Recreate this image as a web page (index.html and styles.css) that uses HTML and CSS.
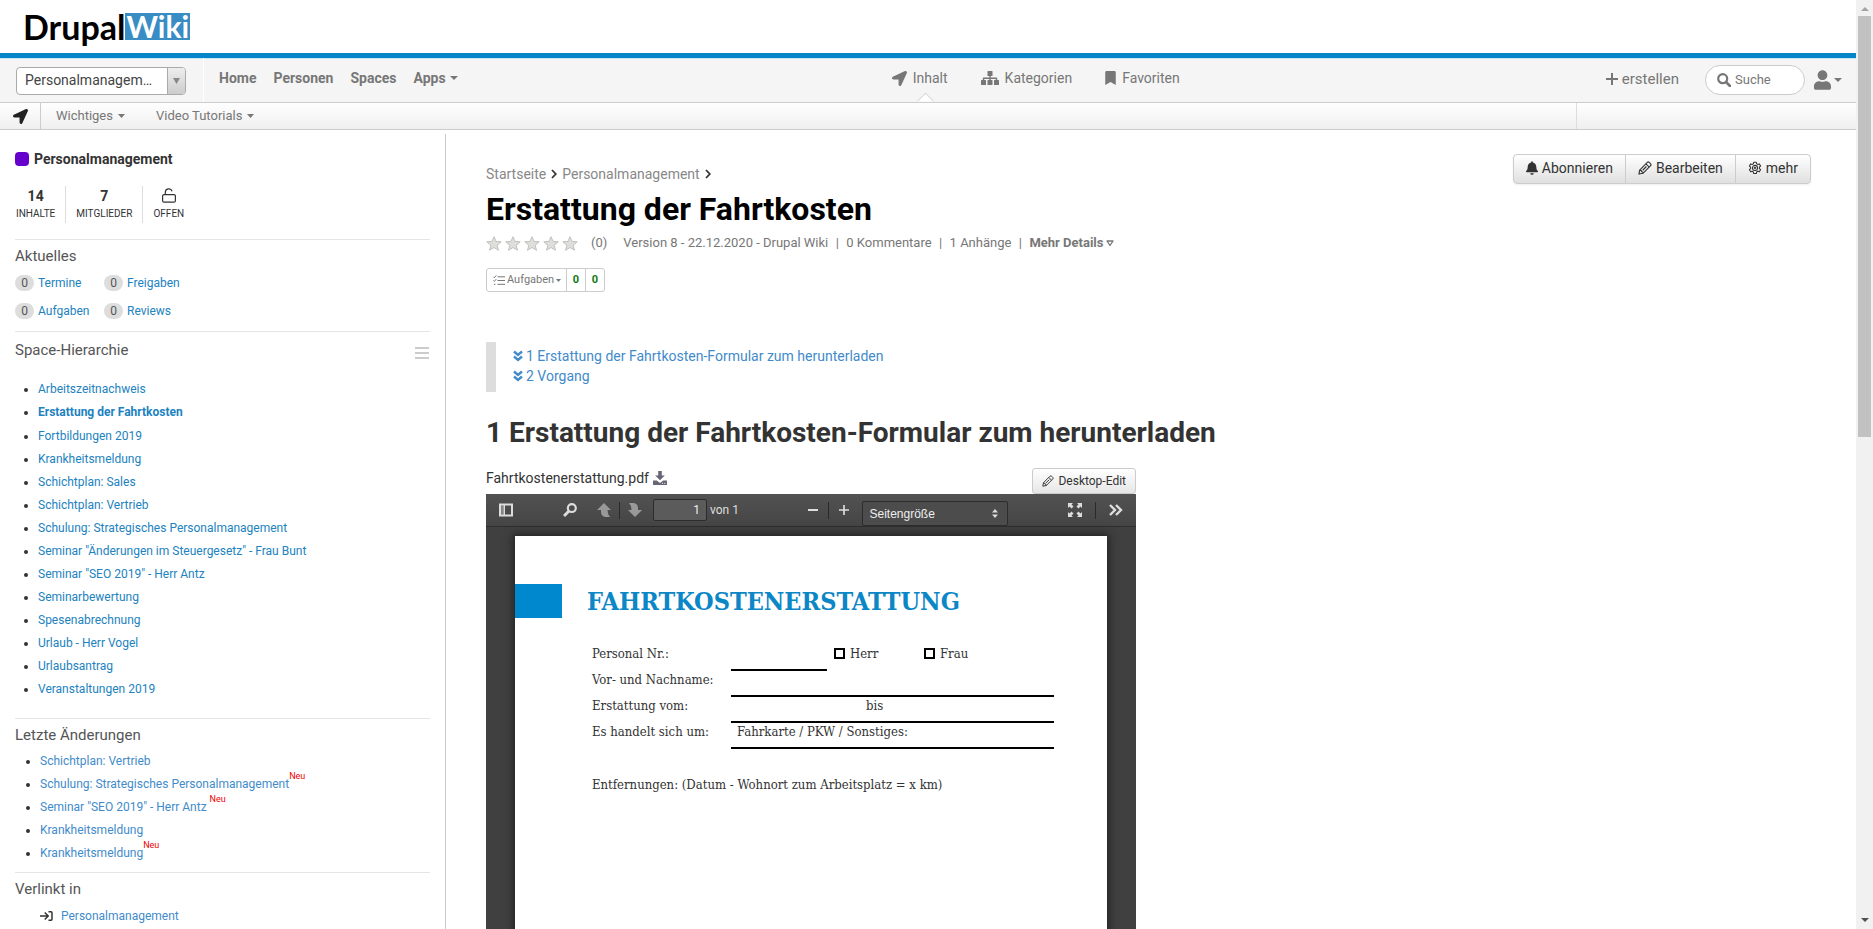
FILE: index.html
```html
<!DOCTYPE html>
<html lang="de">
<head>
<meta charset="utf-8">
<title>Erstattung der Fahrtkosten | Drupal Wiki</title>
<link rel="stylesheet" href="styles.css">
</head>
<body>
<svg class="sprite" aria-hidden="true">
  <symbol id="i-arrow" viewBox="0 0 512 512"><path d="M444.52 3.52L28.74 195.42c-47.97 22.39-31.98 92.75 19.19 92.75h175.91v175.91c0 51.17 70.36 67.17 92.75 19.19l191.9-415.78c15.99-38.39-25.59-79.97-63.97-63.97z"/></symbol>
  <symbol id="i-sitemap" viewBox="0 0 18 14"><path d="M7 0h4q.5 0 .5.5v4q0 .5-.5.5H9.700v1.600H15.500q.700 0 .700.700V9H17.500q.5 0 .5.5v4q0 .5-.5.5h-4q-.5 0-.5-.5v-4q0-.5.5-.5h1.300V8H9.700v1H11q.5 0 .5.5v4q0 .5-.5.5H7q-.5 0-.5-.5v-4Q6.500 9 7 9h1.300V8H3.200v1H4.500q.5 0 .5.5v4q0 .5-.5.5h-4q-.5 0-.5-.5v-4Q0 9 .5 9h1.300V7.300q0-.7.7-.7h5.800V5H7q-.5 0-.5-.5v-4Q6.500 0 7 0z"/></symbol>
  <symbol id="i-bookmark" viewBox="0 0 384 512"><path d="M0 512V48C0 21.490 21.490 0 48 0h288c26.510 0 48 21.490 48 48v464L192 400 0 512z"/></symbol>
  <symbol id="i-bell" viewBox="0 0 448 512"><path d="M224 512c35.320 0 63.970-28.650 63.970-64H160.030c0 35.350 28.650 64 63.970 64zm215.390-149.710c-19.320-20.760-55.470-51.990-55.470-154.290 0-77.700-54.480-139.900-127.940-155.160V32c0-17.670-14.320-32-31.980-32s-31.980 14.330-31.980 32v20.840C118.560 68.100 64.080 130.300 64.080 208c0 102.300-36.150 133.530-55.470 154.290-6 6.450-8.660 14.160-8.610 21.710.110 16.400 12.980 32 32.100 32h383.800c19.120 0 32-15.600 32.100-32 .050-7.550-2.610-15.270-8.610-21.710z"/></symbol>
  <symbol id="i-user" viewBox="0 0 448 512"><path d="M224 256c70.700 0 128-57.300 128-128S294.700 0 224 0 96 57.300 96 128s57.300 128 128 128zm89.600 32h-16.700c-22.200 10.200-46.900 16-72.900 16s-50.600-5.800-72.900-16h-16.700C60.200 288 0 348.200 0 422.400V464c0 26.500 21.500 48 48 48h352c26.500 0 48-21.500 48-48v-41.600c0-74.200-60.200-134.400-134.400-134.400z"/></symbol>
  <symbol id="i-search" viewBox="0 0 14 14"><circle cx="5.700" cy="5.700" r="4.500" fill="none" stroke="currentColor" stroke-width="2.200"/><path d="M9 9l4 4" stroke="currentColor" stroke-width="2.600" stroke-linecap="round"/></symbol>
  <symbol id="i-plus" viewBox="0 0 12 12"><path d="M6 0v12M0 6h12" stroke="currentColor" stroke-width="2"/></symbol>
  <symbol id="i-caret" viewBox="0 0 8 4" preserveAspectRatio="none"><path d="M0 0h8L4 4z"/></symbol>
  <symbol id="i-lock" viewBox="0 0 14 15"><g fill="none" stroke="currentColor" stroke-width="1.200"><rect x=".6" y="6.600" width="12.800" height="7.600" rx="1.500"/><path d="M3.300 6.500V4.500a3.500 3.500 0 0 1 6.800-1.300"/></g></symbol>
  <symbol id="i-pencil" viewBox="0 0 15 15"><g fill="none" stroke="currentColor" stroke-width="1.200" stroke-linejoin="round"><path d="M1 14l.8-4.300L10 1.500q1-1 2 0L13.500 3q1 1 0 2L5.300 13.200z"/><path d="M8.500 3l3.500 3.500M5 9.900l4-4M2 10l1.500.2.300 1.300 1.300.3.200 1.300"/></g></symbol>
  <symbol id="i-gear" viewBox="0 0 16 16"><g fill="none" stroke="currentColor" stroke-width="1.200" stroke-linejoin="round"><path d="M6.500 1.500h3l.4 1.700 1.200.7 1.800-.6 1.500 2.500-1.400 1.300v1.500l1.400 1.300-1.500 2.500-1.800-.6-1.200.7-.4 1.800h-3l-.4-1.800-1.200-.7-1.800.6-1.500-2.500L3 8.600V7.100L1.600 5.800l1.500-2.500 1.800.6 1.200-.7z"/><circle cx="8" cy="7.900" r="2.900"/><circle cx="8" cy="7.900" r=".7"/></g></symbol>
  <symbol id="i-star" viewBox="0 0 16 15"><path d="M8 .7l2 4.700 5.200.4-4 3.400 1.300 5.100L8 11.500l-4.500 2.800 1.300-5.100-4-3.400L6 5.400z" fill="#dededc" stroke="#c0c0bd" stroke-width="1"/></symbol>
  <symbol id="i-tasks" viewBox="0 0 12 11"><path d="M4.500 1.800H12M4.500 5.500H12M4.500 9.300H12M.3 1.700l1 1 2-2.300M.3 5.400l1 1 2-2.300M.8 9.300h1.600" fill="none" stroke="currentColor" stroke-width="1"/></symbol>
  <symbol id="i-down2" viewBox="0 0 10 12"><path d="M1 1.500l4 3.500 4-3.500M1 6.500L5 10l4-3.500" fill="none" stroke="currentColor" stroke-width="2.400"/></symbol>
  <symbol id="i-chev" viewBox="0 0 6 10"><path d="M1 1l3.800 4L1 9" fill="none" stroke="currentColor" stroke-width="1.800"/></symbol>
  <symbol id="i-tri" viewBox="0 0 8 7"><path d="M1 1h6L4 5.500z" fill="none" stroke="currentColor" stroke-width="1.300" stroke-linejoin="round"/></symbol>
  <symbol id="i-download" viewBox="0 0 14 14"><path d="M5.200 0h3.600v4.500h3L7 9.200 2.200 4.500h3zM0 9.500h3.800L7 12l3.200-2.500H14V14H0z"/><path d="M9 12.300h1M11.300 12.300h1" stroke="#fff"/></symbol>
  <symbol id="i-enter" viewBox="0 0 13 10"><path d="M0 5h8M4.700 1.500L8.200 5 4.700 8.500M8.500.8H11q1 0 1 1v6.400q0 1-1 1H8.500" fill="none" stroke="currentColor" stroke-width="1.500"/></symbol>
  <symbol id="i-side" viewBox="0 0 14 13"><path d="M0 0h14v13H0zM2 2v9h2.500V2zm4 0v9h6V2z" fill-rule="evenodd"/><path d="M2 2h2.500v9H2z" opacity=".4"/></symbol>
  <symbol id="i-find" viewBox="0 0 13 13"><circle cx="8.200" cy="4.700" r="3.700" fill="none" stroke="currentColor" stroke-width="2"/><path d="M5.500 7.500L1 12" stroke="currentColor" stroke-width="2.600"/></symbol>
  <symbol id="i-up" viewBox="0 0 14 14"><path d="M7 0l7 7h-3.500q0 4.500 2.500 7H8Q4 13 4 9V7H0z"/></symbol>
  <symbol id="i-down" viewBox="0 0 14 14"><path d="M7 14l7-7h-4V5Q10 1 6 0H1q2.500 2.500 2.500 7H0z"/></symbol>
  <symbol id="i-full" viewBox="0 0 14 14"><path d="M0 0h5L3.500 1.500l2 2-2 2-2-2L0 5zM14 0v5l-1.500-1.500-2 2-2-2 2-2L9 0zM0 14V9l1.500 1.500 2-2 2 2-2 2L5 14zM14 14H9l1.500-1.500-2-2 2-2 2 2L14 9z"/></symbol>
  <symbol id="i-more" viewBox="0 0 14 12"><path d="M1 1l5 5-5 5M7 1l5 5-5 5" fill="none" stroke="currentColor" stroke-width="2.400"/></symbol>
  <symbol id="i-updown" viewBox="0 0 6 9"><path d="M3 0l3 3.500H0zM3 9l3-3.500H0z"/></symbol>
</svg>

<div class="page">
  <header>
    <div class="brand"><a class="logo" href="#"><span class="logo-a">Drupal</span><span class="logo-b">Wiki</span></a></div>
    <div class="navbar">
      <div class="nav-left">
        <div class="space-select">
          <select aria-label="Space"><option>Personalmanagem…</option></select>
          <span class="space-arrow"><svg class="caret-d"><use href="#i-caret"/></svg></span>
        </div>
        <nav class="nav-main">
          <a href="#">Home</a><a href="#">Personen</a><a href="#">Spaces</a><a href="#">Apps<svg class="caret"><use href="#i-caret"/></svg></a>
        </nav>
      </div>
      <nav class="nav-mid">
        <a class="active" href="#"><svg class="i15"><use href="#i-arrow"/></svg>Inhalt</a>
        <a href="#"><svg class="i18"><use href="#i-sitemap"/></svg>Kategorien</a>
        <a href="#"><svg class="i11"><use href="#i-bookmark"/></svg>Favoriten</a>
      </nav>
      <div class="nav-right">
        <a class="create" href="#"><svg class="i12"><use href="#i-plus"/></svg>erstellen</a>
        <label class="search"><svg class="i14"><use href="#i-search"/></svg><input type="text" placeholder="Suche" aria-label="Suche"></label>
        <button class="user" aria-label="Benutzer"><svg class="i-user"><use href="#i-user"/></svg><svg class="caret"><use href="#i-caret"/></svg></button>
      </div>
    </div>
    <div class="subnav">
      <a class="sub-icon" href="#" aria-label="Inhalt"><svg class="i15"><use href="#i-arrow"/></svg></a>
      <nav class="sub-links"><a href="#">Wichtiges<svg class="caret-s"><use href="#i-caret"/></svg></a><a href="#">Video Tutorials<svg class="caret-s"><use href="#i-caret"/></svg></a></nav>
      <div class="sub-end"></div>
    </div>
  </header>

  <div class="columns">
    <aside class="sidebar">
      <a class="space-name" href="#"><span class="swatch"></span>Personalmanagement</a>
      <div class="stats">
        <div><b>14</b><span>INHALTE</span></div>
        <div><b>7</b><span>MITGLIEDER</span></div>
        <div><svg class="lock"><use href="#i-lock"/></svg><span>OFFEN</span></div>
      </div>
      <section class="block">
        <h3>Aktuelles</h3>
        <div class="counts">
          <a href="#"><span class="badge">0</span>Termine</a><a href="#"><span class="badge">0</span>Freigaben</a>
          <a href="#"><span class="badge">0</span>Aufgaben</a><a href="#"><span class="badge">0</span>Reviews</a>
        </div>
      </section>
      <section class="block hierarchy">
        <div class="head"><h3>Space-Hierarchie</h3><button class="burger" aria-label="Menü"><i></i><i></i><i></i></button></div>
        <ul>
          <li><a href="#">Arbeitszeitnachweis</a></li>
          <li class="current"><a href="#">Erstattung der Fahrtkosten</a></li>
          <li><a href="#">Fortbildungen 2019</a></li>
          <li><a href="#">Krankheitsmeldung</a></li>
          <li><a href="#">Schichtplan: Sales</a></li>
          <li><a href="#">Schichtplan: Vertrieb</a></li>
          <li><a href="#">Schulung: Strategisches Personalmanagement</a></li>
          <li><a href="#">Seminar "Änderungen im Steuergesetz" - Frau Bunt</a></li>
          <li><a href="#">Seminar "SEO 2019" - Herr Antz</a></li>
          <li><a href="#">Seminarbewertung</a></li>
          <li><a href="#">Spesenabrechnung</a></li>
          <li><a href="#">Urlaub - Herr Vogel</a></li>
          <li><a href="#">Urlaubsantrag</a></li>
          <li><a href="#">Veranstaltungen 2019</a></li>
        </ul>
      </section>
      <section class="block recent">
        <h3>Letzte Änderungen</h3>
        <ul>
          <li><a href="#">Schichtplan: Vertrieb</a></li>
          <li><a href="#">Schulung: Strategisches Personalmanagement</a><sup>Neu</sup></li>
          <li><a href="#">Seminar "SEO 2019" - Herr Antz</a> <sup>Neu</sup></li>
          <li><a href="#">Krankheitsmeldung</a></li>
          <li><a href="#">Krankheitsmeldung</a><sup>Neu</sup></li>
        </ul>
      </section>
      <section class="block linked">
        <h3>Verlinkt in</h3>
        <a href="#"><svg class="enter"><use href="#i-enter"/></svg>Personalmanagement</a>
      </section>
    </aside>

    <main>
      <div class="top">
        <div class="title-area">
          <nav class="crumbs"><a href="#">Startseite</a><svg class="chev"><use href="#i-chev"/></svg><a href="#">Personalmanagement</a><svg class="chev"><use href="#i-chev"/></svg></nav>
          <h1>Erstattung der Fahrtkosten</h1>
        </div>
        <div class="actions">
          <button><svg class="bell"><use href="#i-bell"/></svg>Abonnieren</button><button><svg class="i14"><use href="#i-pencil"/></svg>Bearbeiten</button><button><svg class="i14"><use href="#i-gear"/></svg>mehr</button>
        </div>
      </div>
      <div class="meta">
        <span class="stars"><svg><use href="#i-star"/></svg><svg><use href="#i-star"/></svg><svg><use href="#i-star"/></svg><svg><use href="#i-star"/></svg><svg><use href="#i-star"/></svg></span>
        <span class="votes">(0)</span>
        <span>Version 8 - 22.12.2020 - Drupal Wiki</span><span class="bar">|</span><span>0 Kommentare</span><span class="bar">|</span><span>1 Anhänge</span><span class="bar">|</span><a href="#">Mehr Details<svg class="tri"><use href="#i-tri"/></svg></a>
      </div>
      <div class="tasks">
        <button><svg class="tasks-icon"><use href="#i-tasks"/></svg>Aufgaben<svg class="caret-t"><use href="#i-caret"/></svg></button><b>0</b><b>0</b>
      </div>
      <nav class="toc">
        <a href="#s1"><svg class="down2"><use href="#i-down2"/></svg>1 Erstattung der Fahrtkosten-Formular zum herunterladen</a>
        <a href="#s2"><svg class="down2"><use href="#i-down2"/></svg>2 Vorgang</a>
      </nav>
      <h2 id="s1">1 Erstattung der Fahrtkosten-Formular zum herunterladen</h2>

      <div class="attachment">
        <div class="file">
          <a href="#">Fahrtkostenerstattung.pdf<svg class="i14"><use href="#i-download"/></svg></a>
          <button class="desktop-edit"><svg class="i12"><use href="#i-pencil"/></svg>Desktop-Edit</button>
        </div>
        <div class="viewer">
          <div class="toolbar">
            <div class="tool-group">
              <button aria-label="Seitenleiste" class="t-side"><svg class="i14"><use href="#i-side"/></svg></button>
              <button aria-label="Suchen" class="t-find"><svg class="i14"><use href="#i-find"/></svg></button>
              <button aria-label="Zurück" class="dim"><svg class="i14"><use href="#i-up"/></svg></button>
              <span class="sep"></span>
              <button aria-label="Weiter" class="dim"><svg class="i14"><use href="#i-down"/></svg></button>
              <input class="page-no" type="text" value="1" aria-label="Seite"><span class="of">von 1</span>
            </div>
            <div class="tool-group zoom-group">
              <button aria-label="Verkleinern"><span class="minus"></span></button>
              <span class="sep"></span>
              <button aria-label="Vergrößern"><svg class="i10"><use href="#i-plus"/></svg></button>
              <div class="zoom"><select aria-label="Zoom"><option>Seitengröße</option></select><svg class="updown"><use href="#i-updown"/></svg></div>
            </div>
            <div class="tool-group">
              <button aria-label="Vollbild"><svg class="i14"><use href="#i-full"/></svg></button>
              <span class="sep wide"></span>
              <button aria-label="Werkzeuge"><svg class="more"><use href="#i-more"/></svg></button>
            </div>
          </div>
          <div class="sheet">
            <div class="sheet-head"><div class="block-mark"></div><h4>FAHRTKOSTENERSTATTUNG</h4></div>
            <form class="form">
              <div class="row"><label for="nr">Personal Nr.:</label><div class="nr"><input id="nr" class="line short" type="text"><label class="check"><input type="checkbox">Herr</label><label class="check"><input type="checkbox">Frau</label></div></div>
              <div class="row"><label for="name">Vor- und Nachname:</label><input id="name" class="line" type="text"></div>
              <div class="row"><label for="from">Erstattung vom:</label><div class="line split"><input id="from" class="from" type="text"><label for="to">bis</label><input id="to" type="text"></div></div>
              <div class="row"><label for="kind">Es handelt sich um:</label><div class="line split kind"><label for="kind">Fahrkarte / PKW / Sonstiges:</label><input id="kind" type="text"></div></div>
              <p>Entfernungen: (Datum - Wohnort zum Arbeitsplatz = x km)</p>
            </form>
          </div>
        </div>
      </div>
    </main>
  </div>
</div>
<div class="scrollbar" aria-hidden="true"><svg class="sb-up"><use href="#i-caret"/></svg><span class="thumb"></span><svg class="sb-down"><use href="#i-caret"/></svg></div>
</body>
</html>
```
FILE: styles.css
```css
* { box-sizing: border-box; }
body {
  margin: 0;
  display: flex;
  height: 100vh;
  overflow: hidden;
  background: #fff;
  color: #333;
  font: 14px/20px Roboto, "Liberation Sans", sans-serif;
}
a { color: inherit; text-decoration: none; }
button, input, select { font: inherit; color: inherit; }
button { cursor: pointer; }
h1, h2, h3, h4, p, ul { margin: 0; padding: 0; font-weight: inherit; }
svg { fill: currentColor; flex: none; }
.sprite { position: absolute; width: 0; height: 0; }
.page { flex: 1; min-width: 0; overflow: hidden; }

.i10 { width: 10px; height: 10px; }
.i11 { width: 11px; height: 14px; }
.i12 { width: 12px; height: 12px; }
.i14 { width: 14px; height: 14px; }
.i15 { width: 15px; height: 15px; }
.i18 { width: 18px; height: 14px; }
.caret { width: 8px; height: 4px; }
.caret-s { width: 7px; height: 4px; }
.caret-t { width: 5px; height: 3px; }
.caret-d { width: 7px; height: 6px; }

/* Header */
.brand { display: flex; align-items: center; height: 53px; padding-left: 23px; }
.logo { display: flex; align-items: center; font-family: Lato, sans-serif; font-weight: 700; }
.logo-a { color: #000; font-size: 34px; line-height: 27px; }
.logo-b { background: #3a8cc4; color: #fff; font-size: 30px; line-height: 27px; padding: 0 1px; }
.navbar {
  display: flex;
  justify-content: space-between;
  height: 50px;
  background: #f5f5f5;
  border-top: 5px solid #0485c8;
  border-bottom: 1px solid #ccc;
  box-shadow: inset 0 1px #c5e6f7;
  color: #777;
}
.nav-left { display: flex; }
.space-select {
  display: flex;
  width: 170px;
  height: 28px;
  margin: 9px 17px 0 16px;
  border: 1px solid #aaa;
  border-radius: 4px;
  background: #fff;
  overflow: hidden;
}
.space-select select {
  appearance: none;
  flex: 1;
  min-width: 0;
  border: 0;
  background: transparent;
  padding: 0 0 2px 8px;
  color: #444;
  font-size: 14px;
}
.space-arrow {
  display: flex;
  align-items: center;
  justify-content: center;
  width: 18px;
  border-left: 1px solid #aaa;
  background: linear-gradient(#eee, #ccc);
  color: #888;
}
.nav-main { display: flex; gap: 17px; padding-left: 15px; border-left: 1px solid #fff; font-weight: 700; line-height: 40px; }
.nav-main a { display: flex; align-items: center; height: 40px; gap: 4px; }
.nav-mid { display: flex; gap: 33px; margin-left: 8px; }
.nav-mid a { position: relative; display: flex; align-items: center; gap: 6px; height: 40px; }
.nav-mid .active::after {
  content: "";
  position: absolute;
  left: 27px;
  bottom: -10px;
  width: 12px;
  height: 12px;
  background: #fff;
  border: solid #ccc;
  border-width: 1px 0 0 1px;
  transform: rotate(45deg);
  clip-path: polygon(0 0, 100% 0, 0 100%);
}
.nav-right { display: flex; align-items: center; padding: 0 14px 0 0; }
.create { display: flex; align-items: center; gap: 4px; font-size: 15px; margin-right: 26px; padding-bottom: 2px; }
.search {
  display: flex;
  align-items: center;
  gap: 4px;
  width: 100px;
  height: 30px;
  padding: 0 11px;
  background: #fff;
  border: 1px solid #ccc;
  border-radius: 15px;
}
.search input { width: 100%; min-width: 0; border: 0; padding: 0; background: none; outline: 0; font-size: 13px; }
.search input::placeholder { color: #777; opacity: 1; }
.user { display: flex; align-items: center; gap: 3px; margin-left: 9px; padding: 0; border: 0; background: none; }
.i-user { width: 17px; height: 20px; }
.subnav {
  display: flex;
  height: 27px;
  background: linear-gradient(#fff, #efefef);
  border-bottom: 1px solid #ccc;
  color: #777;
  font-size: 13px;
}
.sub-icon { display: flex; align-items: center; justify-content: center; width: 41px; border-right: 1px solid #ccc; color: #222; }
.sub-links { flex: 1; display: flex; gap: 31px; padding-left: 15px; }
.sub-links a { display: flex; align-items: center; gap: 5px; }
.sub-end { width: 280px; border-left: 1px solid #ddd; }

/* Sidebar */
.columns { display: flex; padding-top: 4px; }
.sidebar { flex: 0 0 446px; padding: 15px 15px 40px; border-right: 1px solid #ccc; font-size: 12px; min-height: 800px; }
.space-name { display: flex; align-items: center; gap: 5px; font-size: 14px; font-weight: 700; color: #333; }
.swatch { width: 14px; height: 14px; border-radius: 4px; background: #6600cc; }
.stats { display: flex; margin: 17px 0 16px; }
.stats div { display: flex; flex-direction: column; align-items: center; height: 37px; padding: 0 10px; border-right: 1px solid #ddd; }
.stats div:first-child { padding-left: 1px; }
.stats div:last-child { border: 0; }
.stats b { font-size: 14px; line-height: 20px; }
.stats span { font-size: 10px; line-height: 16px; }
.lock { width: 14px; height: 15px; margin: 2px 0 3px; }
.block { border-top: 1px solid #e5e5e5; }
h3 { font-size: 15px; line-height: 20px; color: #555; }
.block h3 { padding-top: 6px; }
.block a { color: #2182c0; }
.counts { display: grid; grid-template-columns: 89px 1fr; row-gap: 8px; padding: 7px 0 10px; }
.counts a { display: flex; align-items: center; gap: 4px; height: 20px; }
.badge { width: 19px; line-height: 16px; border-radius: 8px; background: #ddd; color: #555; text-align: center; }
.head { display: flex; justify-content: space-between; align-items: center; padding-top: 2px; }
.burger { display: flex; flex-direction: column; gap: 3px; width: 16px; padding: 12px 1px 0; border: 0; background: none; }
.burger i { height: 2px; background: #ccc; }
.hierarchy { padding-bottom: 17px; }
.hierarchy ul { padding: 18px 0 0 23px; }
.hierarchy .current { padding-bottom: 1px; font-weight: 700; }
.block li { line-height: 23px; }
.block li::marker { color: #333; }
.recent ul { padding: 5px 0 7px 25px; }
.recent li a, .linked a { color: #428bca; }
sup { color: #e00; font-size: 9px; line-height: 0; vertical-align: 9px; }
.linked a { display: flex; align-items: center; gap: 8px; padding: 7px 0 0 25px; }
.enter { width: 13px; height: 10px; color: #333; }

/* Article */
main { flex: 1; min-width: 0; padding: 20px 45px 0 40px; }
.top { display: flex; justify-content: space-between; align-items: flex-start; }
.crumbs { display: flex; align-items: center; gap: 5px; padding-top: 10px; color: #888; }
.chev { width: 6px; height: 10px; color: #333; }
h1 { color: #000; font-size: 32px; line-height: 40px; font-weight: 700; padding-top: 5px; }
.actions { display: flex; height: 30px; border: 1px solid #ccc; border-radius: 4px; background: linear-gradient(#fff, #e0e0e0); box-shadow: 0 1px 2px #0001; }
.actions button { display: flex; align-items: center; gap: 4px; padding: 0 12px 2px; border: 0; border-right: 1px solid #ccc; background: none; }
.actions button:last-child { border: 0; }
.bell { width: 12px; height: 14px; }
.meta { display: flex; align-items: center; padding-top: 4px; font-size: 13px; color: #777; }
.stars { display: flex; gap: 3px; }
.stars svg { width: 16px; height: 15px; }
.votes { margin: 0 16px 0 13px; }
.bar { width: 18px; text-align: center; }
.meta a { display: flex; align-items: center; gap: 3px; font-weight: 700; }
.tri { width: 8px; height: 7px; }
.tasks { display: flex; width: max-content; height: 24px; margin-top: 15px; border: 1px solid #ccc; border-radius: 3px; font-size: 11px; color: #777; }
.tasks button { display: flex; align-items: center; gap: 2px; width: 79px; padding: 0 6px; border: 0; background: none; white-space: nowrap; }
.tasks-icon { width: 12px; height: 11px; }
.tasks b { width: 19px; border-left: 1px solid #ccc; line-height: 22px; text-align: center; color: #171; }
.toc { margin-top: 50px; padding: 4px 0 6px 17px; border-left: 10px solid #ddd; color: #428bca; }
.toc a { display: flex; align-items: center; gap: 3px; }
.down2 { width: 10px; height: 12px; }
h2 { font-size: 28px; line-height: 40px; font-weight: 700; margin-top: 21px; }

/* PDF viewer */
.attachment { width: 650px; max-width: 100%; margin-top: 15px; }
.file { display: flex; justify-content: space-between; height: 26px; }
.file a { display: flex; align-items: center; height: 20px; gap: 4px; }
.file a svg { color: #667; }
.desktop-edit { display: flex; align-items: center; gap: 4px; padding: 0 9px; border: 1px solid #ccc; border-radius: 3px; background: linear-gradient(#fff, #e6e6e6); font-size: 12px; }
.viewer { background: #404040; }
.toolbar { display: flex; justify-content: space-between; height: 33px; padding: 0 7px; background: linear-gradient(#525252, #454545); border-bottom: 1px solid #2e2e2e; color: #ddd; }
.tool-group { display: flex; align-items: center; }
.zoom-group { margin-left: 8px; }
.tool-group button { display: flex; align-items: center; justify-content: center; width: 26px; height: 26px; padding: 0; border: 0; background: none; }
.tool-group .t-find { margin: 0 8px 0 38px; }
.tool-group .dim { color: #999; }
.sep { width: 1px; height: 17px; margin: 0 2px; background: #2a2a2a; }
.sep.wide { margin: 0 7px; }
.page-no { width: 54px; height: 22px; margin-left: 5px; padding: 0 6px; border: 1px solid #2c2c2c; border-radius: 2px; background: #5b5b5b; color: #eee; text-align: right; font-size: 12px; }
.of { margin-left: 3px; font-size: 12px; }
.minus { width: 10px; height: 2px; background: #ddd; }
.zoom { display: flex; align-items: center; align-self: flex-end; width: 146px; height: 25px; margin-left: 5px; padding-right: 9px; border: 1px solid #2c2c2c; border-radius: 2px; background: #4c4c4c; }
.zoom select { appearance: none; flex: 1; min-width: 0; padding: 0 6px; border: 0; background: transparent; color: #eee; font: 12px/16px "Liberation Sans", sans-serif; }
.updown { width: 6px; height: 9px; }
.more { width: 14px; height: 12px; }
.sheet { margin: 9px 29px 0; padding-top: 48px; min-height: 420px; background: #fff; box-shadow: 0 0 8px 2px #222; font: 13px/18px "DejaVu Serif Condensed", "DejaVu Serif", serif; }
.sheet-head { display: flex; align-items: center; gap: 25px; height: 34px; }
.block-mark { width: 47px; height: 34px; background: #0088ce; }
h4 { color: #0b86c6; font: 700 25px/34px "DejaVu Serif Condensed", "DejaVu Serif", serif; padding-top: 2px; }
.form { margin: 27px 53px 0 77px; }
.row { display: grid; grid-template-columns: 139px minmax(0, 1fr); height: 26px; white-space: nowrap; }
.line { width: 100%; height: 26px; padding: 0; border: 0; border-bottom: 2px solid #000; background: none; }
.line.short { width: 96px; }
.nr { display: flex; }
.check { display: flex; gap: 5px; width: 83px; margin-left: 7px; }
.check input { appearance: none; width: 11px; height: 11px; margin: 3px 0 0; border: 2px solid #000; }
.split { display: flex; }
.split input { flex: 1; min-width: 0; height: 18px; padding: 0; border: 0; background: none; }
.split .from { flex: 0 0 135px; }
.kind { padding-left: 6px; }
.form p { margin-top: 27px; }

/* Scrollbar */
.scrollbar { display: flex; flex-direction: column; align-items: center; width: 17px; background: #f1f1f1; color: #505050; padding: 7px 0; }
.sb-up { width: 8px; height: 4px; transform: rotate(180deg); color: #a3a3a3; }
.thumb { width: 13px; height: 46%; margin: 5px 0 auto; background: #c1c1c1; }
.sb-down { width: 8px; height: 4px; }
```
